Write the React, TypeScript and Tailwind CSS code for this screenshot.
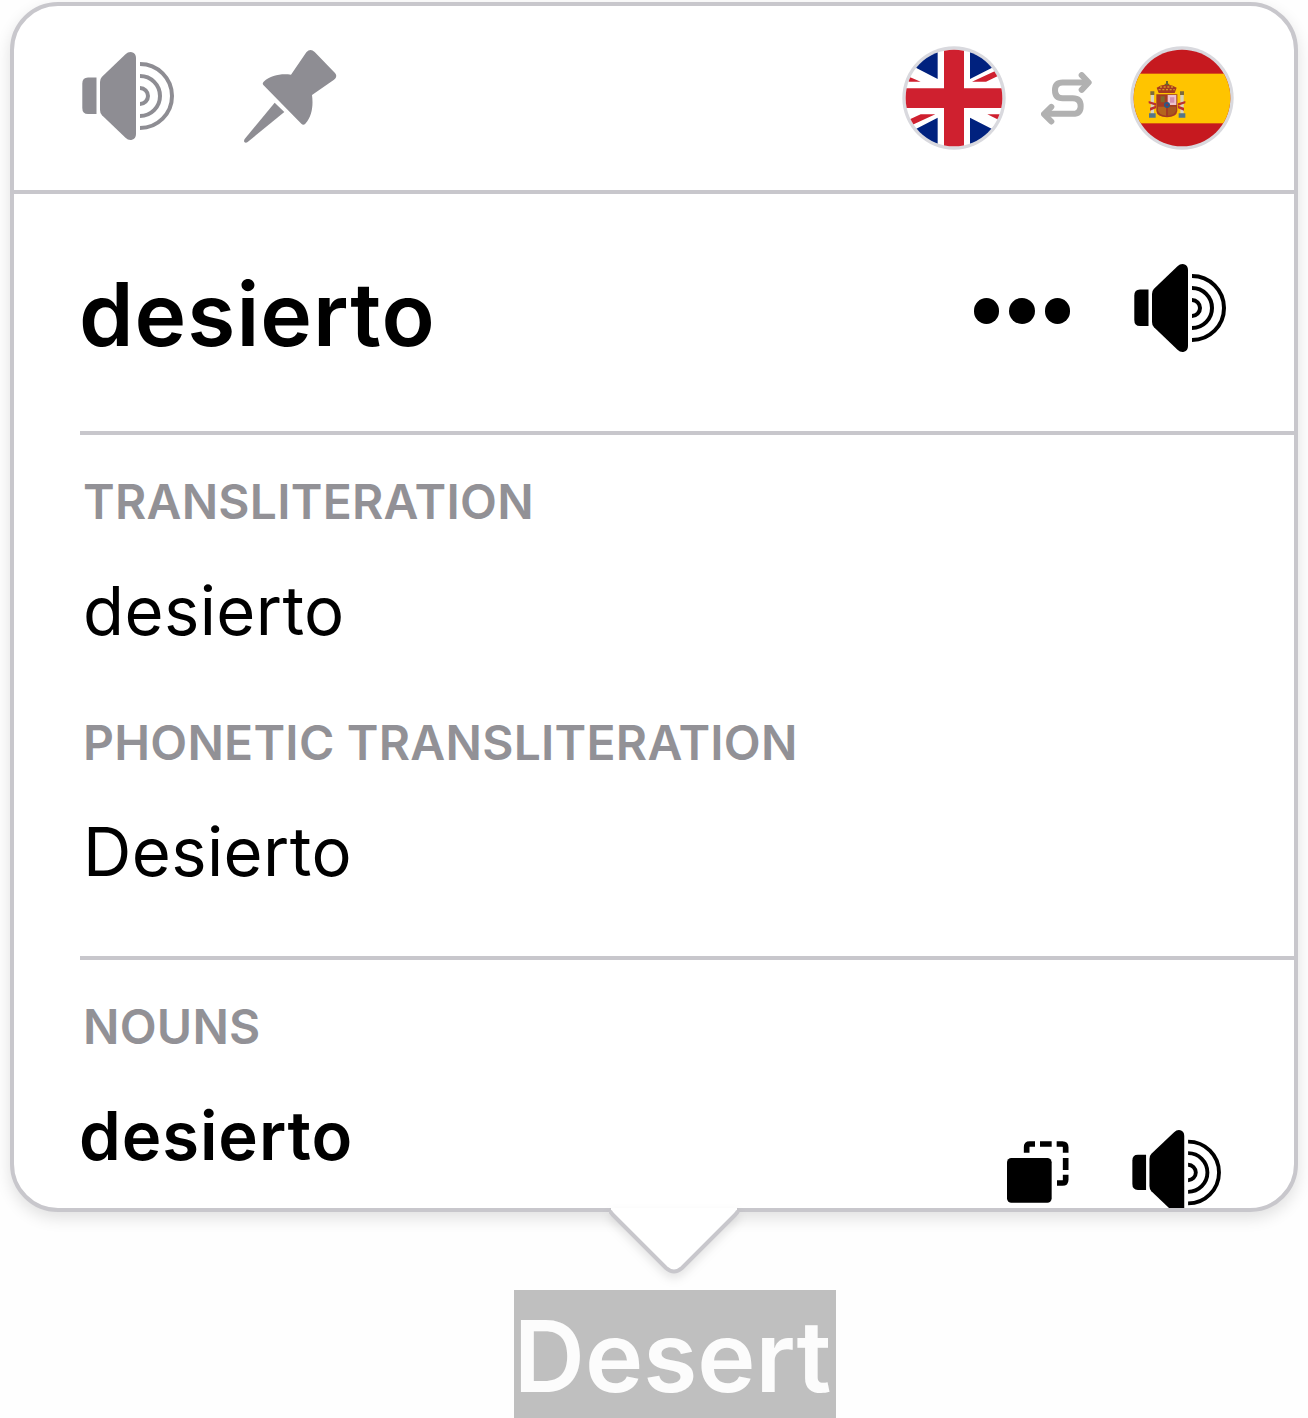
function Speaker({ className }: { className: string }) {
  return (
    <svg viewBox="0 0 92 88" className={className} fill="none">
      <path d="M14.5 25.5V62H6Q0.3 62 0.3 56V31.500Q0.3 25.500 6 25.500Z" fill="currentColor" />
      <path
        d="M18 30Q18 26.800 20 24.700L43.500 2.200Q46.500 -0.600 50 0.200Q54 1.400 54 6V82Q54 86.600 50 87.800Q46.500 88.600 43.500 85.800L20 63.300Q18 61.200 18 58Z"
        fill="currentColor"
      />
      <path d="M58 12A32 32 0 0 1 58 76M58 24A20 20 0 0 1 58 64M58 36A8 8 0 0 1 58 52" stroke="currentColor" strokeWidth="4" />
    </svg>
  );
}

function Pin() {
  return (
    <svg viewBox="548 55 285 285" className="h-[95px] w-[95px]" fill="currentColor">
      <path d="M738 65Q750 51 763 64L824 127Q833 138 821 147L755 193C759 222 756 256 735 279Q729 285 723 279L609 163Q605 158 610 153C632 133 663 128 692 132Z" />
      <path d="M643 216L672 244L562 334Q556 338 552 334Q550 330 553 325Z" />
    </svg>
  );
}

function FlagUK() {
  return (
    <svg viewBox="36 47 312 312" className="size-[104px]">
      <defs>
        <clipPath id="uk">
          <circle cx="192" cy="203" r="145" />
        </clipPath>
      </defs>
      <circle cx="192" cy="203" r="155" fill="#d9d9de" />
      <g clipPath="url(#uk)">
        <rect x="40" y="50" width="304" height="304" fill="#fff" />
        <path d="M143 50V146L66 106V50ZM240 50V146L318 106V50ZM143 356V262L66 302V356ZM240 356V262L318 302V356Z" fill="#00217e" />
        <path d="M40 132L92 154H58L40 146ZM246 154L330 115V134L288 154ZM136 252L40 296V276L92 252ZM292 252H328L346 262V278Z" fill="#cf202f" />
        <path d="M162 50H222V174H344V233H222V356H162V233H40V174H162Z" fill="#cf202f" />
      </g>
    </svg>
  );
}

function FlagSpain() {
  return (
    <svg viewBox="720 47 312 312" className="size-[104px]">
      <defs>
        <clipPath id="es">
          <circle cx="876" cy="203" r="145" />
        </clipPath>
      </defs>
      <circle cx="876" cy="203" r="155" fill="#d9d9de" />
      <g clipPath="url(#es)">
        <rect x="724" y="50" width="304" height="306" fill="#c6191f" />
        <rect x="724" y="130" width="304" height="149" fill="#ffc400" />
      </g>
      <g>
        <path d="M782 194H792V250H782ZM871 194H881V250H871Z" fill="#d8d3c0" />
        <path d="M781 183H793V194H781ZM870 183H882V194H870Z" fill="#7d6b3c" />
        <path d="M777 249H797V262H777ZM866 249H886V262H866Z" fill="#54768a" />
        <path d="M776 212L798 219V226L776 219ZM780 232L798 226V234L780 241ZM886 212L864 219V226L886 219ZM882 232L864 226V234L882 241Z" fill="#bc3030" />
        <path d="M806 188L800 172Q814 162 828 163Q846 162 860 172L854 188Z" fill="#a63b20" />
        <path d="M828 152H834V160H838V164H824V160H828Z" fill="#69652d" />
        <path d="M806 178H854M810 170H850" stroke="#d69b20" strokeWidth="4" strokeDasharray="6 5" />
        <path d="M799 192H862V242Q860 260 831 261Q801 260 799 242Z" fill="#a43b23" />
        <path d="M833 194H859V224H833Z" fill="#eec3cf" />
        <path d="M840 201H853V217H840Z" fill="#d590ae" />
        <path d="M812 198H824V216H812Z" fill="#806b2c" />
        <path d="M804 229H828V256Q806 254 804 240Z" fill="#b5651d" />
        <path d="M834 229H858V240Q856 254 834 256Z" fill="#a8561f" />
        <circle cx="831" cy="224" r="9" fill="#275a88" />
        <circle cx="831" cy="224" r="4" fill="#8a3340" />
      </g>
    </svg>
  );
}

function Swap() {
  return (
    <svg viewBox="455 125 153 158" className="h-[53px] w-[51px]" fill="none" stroke="#b1b1b1" strokeWidth="18" strokeLinejoin="round">
      <path d="M590 156H520Q497 156 497 179Q497 203 520 203H550Q574 203 574 227Q574 250 550 250H474" />
      <path d="M577 134L598 156L577 178M486 229L464 251L486 273" strokeLinecap="round" />
    </svg>
  );
}

function Copy() {
  return (
    <svg viewBox="82 92 186 186" className="size-[62px]" fill="none">
      <rect x="82" y="143" width="134" height="134" rx="13" fill="#000" />
      <path d="M141 127V110Q141 101 150 101H166M181 101H216M231 101H248Q258 101 258 111V127M258 143V179M258 193V208Q258 218 248 218H232" stroke="#000" strokeWidth="17" />
    </svg>
  );
}

function Label({ children }: { children: string }) {
  return <h2 className="-ml-[1px] text-[48px] leading-[60px] font-semibold tracking-[0.25px] text-[#929196]">{children}</h2>;
}

export default function App() {
  return (
    <main className="flex h-[1418px] w-[1308px] flex-col items-center overflow-hidden bg-[#fefefe] pt-[2px] font-['Inter','Liberation_Sans',sans-serif] text-black">
      <section className="relative h-[1210px] w-[1288px] shrink-0 rounded-[48px] border-4 border-[#c8c7cc] bg-white shadow-[0_6px_16px_rgba(0,0,0,0.12)]">
        <div className="flex h-full flex-col overflow-hidden rounded-[44px]">
          <header className="flex h-[188px] shrink-0 items-start border-b-4 border-[#c8c7cc] pr-[60px] pl-[68px] text-[#8e8d93]">
            <Speaker className="mt-[46px] h-[88px] w-[92px]" />
            <div className="mt-[43px] ml-[69px]">
              <Pin />
            </div>
            <div className="mt-[40px] ml-auto flex items-center">
              <FlagUK />
              <div className="mr-[38px] ml-[35px]">
                <Swap />
              </div>
              <FlagSpain />
            </div>
          </header>
          <div className="ml-[66px] flex min-h-0 flex-1 flex-col">
            <div className="flex h-[241px] shrink-0 items-start border-b-4 border-[#c8c7cc] pr-[68px]">
              <h1 className="mt-[66px] -ml-[1px] text-[87.5px] leading-[108px] font-semibold tracking-[1px]">desierto</h1>
              <div className="mt-[104px] ml-auto flex gap-[10px]">
                <i className="size-[25.5px] rounded-full bg-black" />
                <i className="size-[25.5px] rounded-full bg-black" />
                <i className="size-[25.5px] rounded-full bg-black" />
              </div>
              <Speaker className="mt-[70px] ml-[64px] h-[88px] w-[92px]" />
            </div>
            <div className="h-[525px] shrink-0 border-b-4 border-[#c8c7cc] pt-[37px] pl-[4px]">
              <Label>TRANSLITERATION</Label>
              <p className="mt-[39px] -ml-[1px] text-[67px] leading-[80px] tracking-[0.4px]">desierto</p>
              <div className="mt-[62px]">
                <Label>PHONETIC TRANSLITERATION</Label>
              </div>
              <p className="mt-[39px] -ml-[1px] text-[67px] leading-[80px] tracking-[0.4px]">Desierto</p>
            </div>
            <div className="pt-[37px]">
              <div className="pl-[4px]">
                <Label>NOUNS</Label>
              </div>
              <div className="flex items-start pr-[73px]">
                <p className="mt-[39px] -ml-[1px] text-[67px] leading-[80px] font-semibold tracking-[0.9px]">desierto</p>
                <div className="mt-[84px] ml-auto">
                  <Copy />
                </div>
                <Speaker className="mt-[73px] ml-[63px] h-[85px] w-[89px] shrink-0" />
              </div>
            </div>
          </div>
        </div>
        <svg viewBox="0 0 132 90" className="absolute top-[1202px] left-[595px] h-[90px] w-[132px] drop-shadow-[0_5px_5px_rgba(0,0,0,0.1)]">
          <path d="M2 0V4L57 60Q65 67 73 60L128 4V0Z" fill="#fff" />
          <path d="M1 3Q2 5 4 7L57 60Q65 67 73 60L126 7Q128 5 129 3" fill="none" stroke="#c8c7cc" strokeWidth="4" />
        </svg>
      </section>
      <div className="mt-[78px] ml-[42px] flex h-[128px] w-[322px] shrink-0 items-start justify-center bg-[#bfbfbf]">
        <span className="mt-[7px] -ml-[5px] text-[98.5px] leading-[120px] font-semibold whitespace-nowrap text-[#fcfcfc]">Desert</span>
      </div>
    </main>
  );
}
